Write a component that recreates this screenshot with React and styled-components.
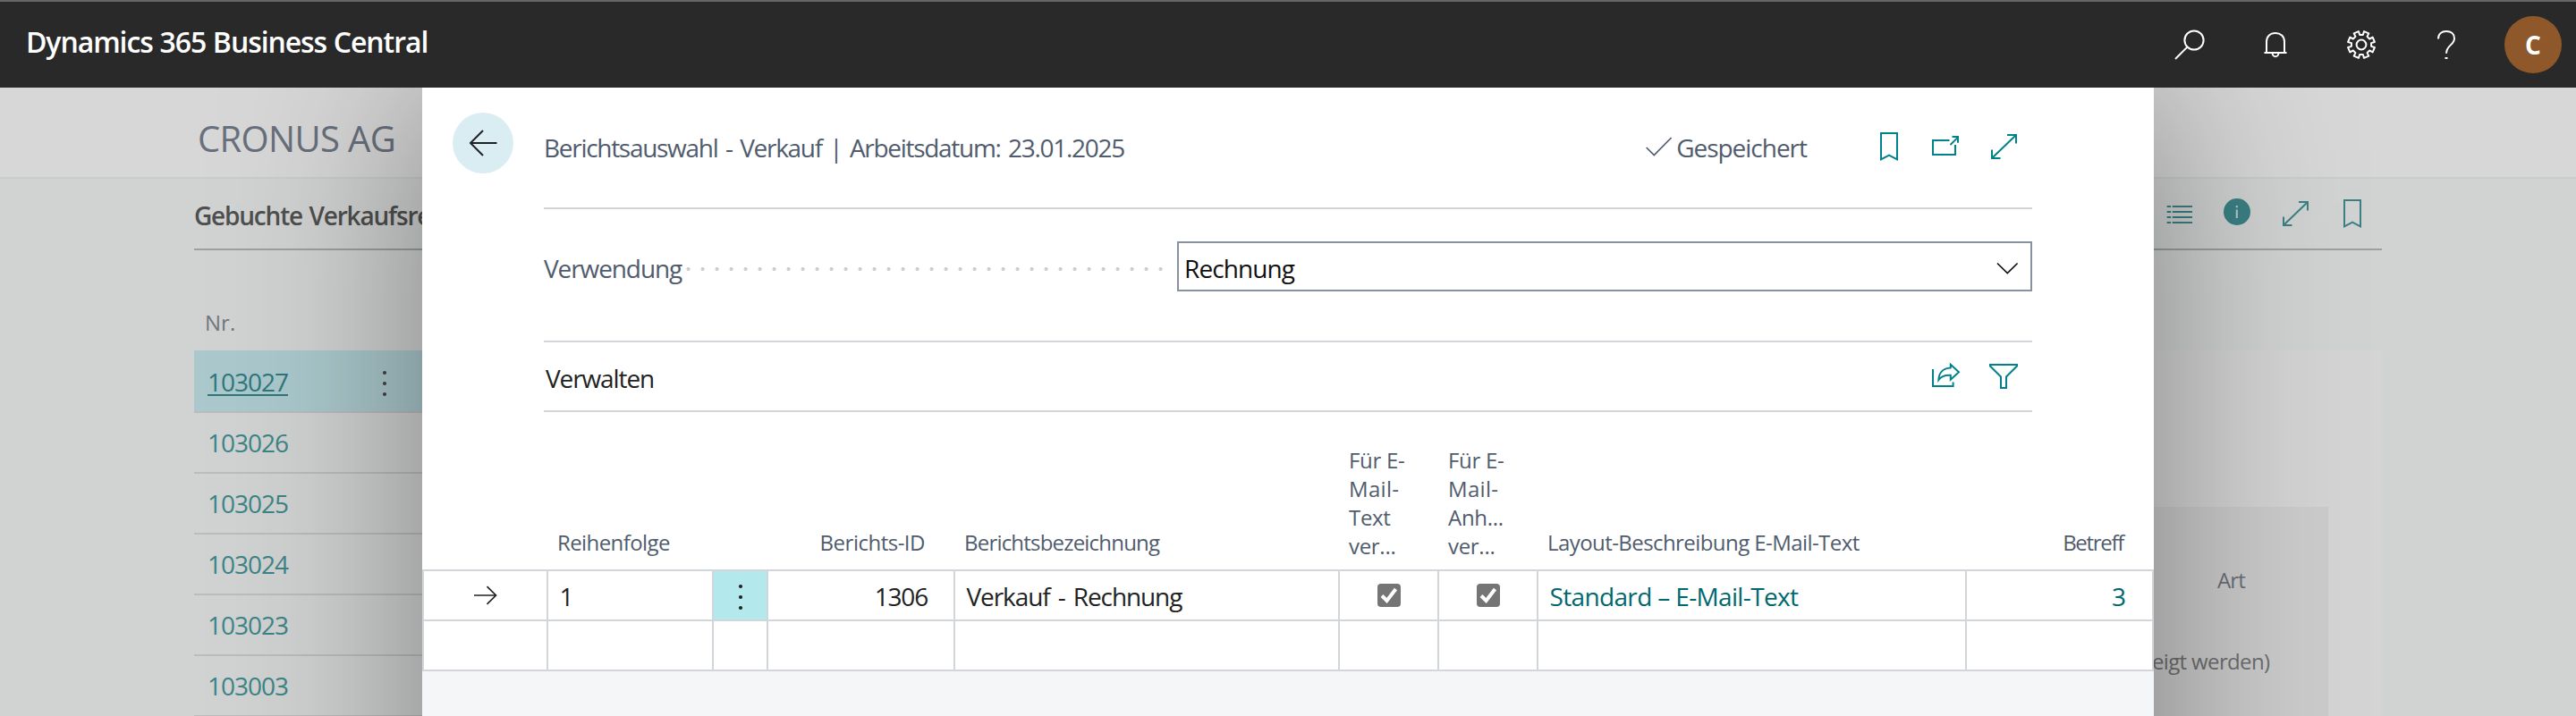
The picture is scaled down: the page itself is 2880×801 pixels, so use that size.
import React from 'react';
import styled, { createGlobalStyle, css } from 'styled-components';

const Global = createGlobalStyle`
  *, *::before, *::after { box-sizing: border-box; }
  html, body { margin: 0; padding: 0; }
  body {
    font-family: "Open Sans", "Noto Sans", sans-serif;
    font-size: 28px;
    line-height: 40px;
    background: #d1d3d2;
    overflow: hidden;
  }
`;

const Screen = styled.div`
  position: relative;
  display: flex;
  flex-direction: column;
  width: 2880px;
  height: 801px;
  overflow: hidden;
  background: #d1d3d2;
`;

const Label = styled.span`
  white-space: nowrap;
  letter-spacing: ${(p) => p.$spacing || 0}px;
  word-spacing: ${(p) => p.$word || 0}px;
`;

const Svg = styled.svg.attrs({ fill: 'none', stroke: 'currentColor' })`
  display: block;
  flex: none;
  overflow: visible;
  stroke-width: 2px;
`;

/* ---------- top bar ---------- */

const TopBar = styled.header`
  position: relative;
  z-index: 3;
  flex: none;
  display: flex;
  justify-content: space-between;
  height: 98px;
  border-top: 2px solid #666;
  background: #292929;
  color: #fff;
`;

const Product = styled.div`
  padding: 25px 0 0 29px;
  font-size: 32px;
  font-weight: 600;
`;

const TopActions = styled.div`
  display: flex;
`;

const TopAction = styled.div`
  display: flex;
  align-items: center;
  justify-content: center;
  width: 96px;
`;

const Avatar = styled.div`
  width: 64px;
  height: 64px;
  border-radius: 50%;
  background: #8e582b;
  text-align: center;
  font-size: 28px;
  font-weight: 700;
  line-height: 64px;
`;

/* ---------- page behind the dialog ---------- */

const CompanyBar = styled.div`
  flex: none;
  display: flex;
  align-items: center;
  height: 102px;
  padding: 13px 221px 0;
  border-bottom: 2px solid #cacccb;
  background: #d7d7d7;
  color: #68707c;
  font-size: 40px;
`;

const PageHead = styled.div`
  flex: none;
  display: flex;
  align-items: center;
  justify-content: space-between;
  height: 80px;
  margin: 0 217px;
  padding-right: 15px;
  border-bottom: 2px solid #9c9fa3;
  color: #4f4f4f;
  font-weight: 600;
`;

const PageTitle = styled.div`
  padding-top: 3px;
`;

const PageIcons = styled.div`
  display: flex;
  gap: 28.5px;
  color: #3a8084;
`;

const PageBody = styled.div`
  flex: 1;
  display: flex;
  justify-content: space-between;
  margin: 0 217px;
`;

const List = styled.div`
  width: 1700px;
`;

const ListHead = styled.div`
  height: 112px;
  padding: 61px 0 0 12px;
  color: #72777e;
  font-size: 24px;
`;

const ListRow = styled.div`
  display: flex;
  align-items: center;
  height: 68px;
  padding-left: 15px;
  border-bottom: 2px solid #bcbcbc;
  color: #3d8588;
  ${(p) => p.$active && css`
    height: 70px;
    padding-top: 2px;
    background: #abc9cd;
    color: #2f777b;
    text-decoration: underline;
    text-decoration-thickness: 2px;
    text-underline-offset: 3px;
  `}
`;

const RowMenu = styled.span`
  display: block;
  margin-left: 105px;
  color: #444;
`;

const FactBox = styled.aside`
  width: 460px;
  margin-top: 112px;
  padding: 175px 60px 0 0;
  background: #d4d4d4;
`;

const FactPart = styled.div`
  height: 300px;
  padding: 66px 0 0 203px;
  background: #cccccc;
  color: #6c6f77;
  font-size: 24px;
  line-height: 32px;
`;

const FactHeading = styled.div`
  padding-left: 73px;
`;

const FactNote = styled.div`
  margin-top: 59px;
  color: #6f6f6f;
`;

/* ---------- dialog ---------- */

const Dialog = styled.section`
  position: absolute;
  z-index: 2;
  top: 98px;
  left: 472px;
  width: 1936px;
  height: 1100px;
  background: #f5f6f8;
  box-shadow: 0 0 200px rgba(0, 0, 0, 0.4);
`;

const DialogUpper = styled.div`
  display: grid;
  grid-template-columns: 136px 1664px;
  background: #fff;
`;

const BackCell = styled.div`
  padding: 28px 0 0 34px;
`;

const BackButton = styled.div`
  display: flex;
  align-items: center;
  justify-content: center;
  width: 68px;
  height: 68px;
  border-radius: 50%;
  background: #daedf3;
  color: #222;
`;

const DialogMain = styled.div`
  display: flex;
  flex-direction: column;
`;

const TitleRow = styled.div`
  display: flex;
  justify-content: space-between;
  height: 136px;
  padding-top: 46px;
  border-bottom: 2px solid #d2d5d9;
  color: #505c6d;
`;

const TitleText = styled.div`
  padding-top: 1px;
`;

const TitleTools = styled.div`
  display: flex;
  align-items: center;
  height: 40px;
  padding-right: 14px;
`;

const Saved = styled.div`
  display: flex;
  align-items: center;
  height: 40px;
  padding-top: 1px;
  margin-right: 74px;
`;

const ToolIcons = styled.div`
  display: flex;
  gap: 28px;
  color: #00828a;
`;

const FieldRow = styled.div`
  display: flex;
  align-items: center;
  height: 56px;
  margin: 36px 0 55px;
`;

const FieldLabel = styled.div`
  width: 154px;
  padding-top: 3px;
  color: #505c6d;
`;

const Leader = styled.div`
  width: 544px;
  height: 16px;
  margin: 6px 10px 0 0;
  background: radial-gradient(circle at 7.6px 8px, #cbd0d6 1.8px, transparent 2.4px) 0 0 / 16px 16px repeat-x;
`;

const Select = styled.div`
  display: flex;
  align-items: center;
  justify-content: space-between;
  width: 956px;
  height: 56px;
  padding: 3px 14px 0 6px;
  border: 2px solid #8a919e;
  color: #111;
`;

const ActionRow = styled.div`
  display: flex;
  align-items: center;
  justify-content: space-between;
  height: 80px;
  padding: 0 14px 0 2px;
  border: solid #d2d5d9;
  border-width: 2px 0;
  color: #222;
`;

const ActionName = styled.div`
  padding-top: 3px;
`;

/* ---------- grid of lines ---------- */

const columns = '141px 185px 61px 209px 430px 111px 111px 479px 209px';

const GridHead = styled.div`
  display: grid;
  grid-template-columns: ${columns};
  align-items: end;
  height: 176px;
  background: #fff;
  color: #505c6d;
  font-size: 24px;
  line-height: 32px;
`;

const HeadCell = styled.div`
  padding: ${(p) => (p.$stacked ? '0 0 10px 10px' : '0 34px 14px 10px')};
  text-align: ${(p) => (p.$right ? 'right' : 'left')};
`;

const HeadLine = styled.div`
  white-space: nowrap;
`;

const GridBody = styled.div`
  border-top: 2px solid #d2d5d9;
`;

const GridRow = styled.div`
  display: grid;
  grid-template-columns: ${columns};
  height: 56px;
  border-bottom: 2px solid #d2d5d9;
  background: #fff;
`;

const cellPadding = {
  center: '0',
  'flex-end': '1px 29px 0 0',
  'flex-start': '1px 0 0 12.5px',
};

const Cell = styled.div`
  display: flex;
  align-items: center;
  justify-content: ${(p) => p.$align || 'flex-start'};
  padding: ${(p) => cellPadding[p.$align || 'flex-start']};
  border-right: 2px solid #d2d5d9;
  background: ${(p) => (p.$menu ? '#b3e9ec' : 'transparent')};
  color: ${(p) => (p.$link ? '#00686f' : '#222')};
  &:first-child { border-left: 2px solid #d2d5d9; }
`;

const CheckBox = styled.div`
  display: flex;
  align-items: center;
  justify-content: center;
  width: 26px;
  height: 26px;
  border-radius: 4px;
  background: #757575;
  color: #fff;
`;

/* ---------- icons ---------- */

const SearchIcon = () => (
  <Svg width="36" height="36" viewBox="0 0 36 36">
    <circle cx="23" cy="13" r="10.6" />
    <path d="M15.4 20.6 L2 34" />
  </Svg>
);

const BellIcon = () => (
  <Svg width="36" height="36" viewBox="0 0 36 36">
    <path d="M5.5 27 H30.5 M8 27 V14.5 C8 8.5 12.5 4.9 18 4.9 S28 8.5 28 14.5 V27" />
    <path d="M14.6 27.5 A3.4 3.8 0 0 0 21.4 27.5" />
  </Svg>
);

const GearIcon = () => {
  const pts = [];
  for (let i = 0; i < 8; i += 1) {
    [[-13, 11.2], [-11, 15.2], [11, 15.2], [13, 11.2]].forEach(([d, r]) => {
      const a = ((i * 45 + 22.5 + d) * Math.PI) / 180;
      pts.push(`${(18 + r * Math.sin(a)).toFixed(2)},${(18 - r * Math.cos(a)).toFixed(2)}`);
    });
  }
  return (
    <Svg width="36" height="36" viewBox="0 0 36 36">
      <polygon points={pts.join(' ')} strokeLinejoin="round" />
      <circle cx="18" cy="18" r="5.4" />
    </Svg>
  );
};

const HelpIcon = () => (
  <Svg width="36" height="36" viewBox="0 0 36 36">
    <path d="M8 11.5 C8 6 11.6 3 17 3 S26 6 26 11 C26 18.5 17 18.5 17 27.8" />
    <path d="M15.5 33 H18.5" />
  </Svg>
);

const ListIcon = () => (
  <Svg width="36" height="36" viewBox="0 0 36 36">
    <path d="M3.7 10 H8 M9.7 10 H32 M3.7 16 H8 M9.7 16 H32 M3.7 22 H8 M9.7 22 H32 M3.7 28 H8 M9.7 28 H32" />
  </Svg>
);

const InfoIcon = () => (
  <Svg width="36" height="36" viewBox="0 0 36 36">
    <circle cx="18" cy="16" r="15" fill="currentColor" stroke="none" />
    <path d="M17.8 13.5 V23 M17.8 9 V11.2" stroke="#b9cccc" />
  </Svg>
);

const ExpandIcon = () => (
  <Svg width="36" height="36" viewBox="0 0 36 36">
    <path d="M5 31 L32 5 M22 5 H32 V14.5 M5 21.5 V31 H14.5" />
  </Svg>
);

const BookmarkIcon = () => (
  <Svg width="36" height="36" viewBox="0 0 36 36">
    <path d="M9 3 H27 V32.3 L18 27.6 L9 32.3 Z" />
  </Svg>
);

const PopOutIcon = () => (
  <Svg width="36" height="36" viewBox="0 0 36 36">
    <path d="M21.5 11 H3 V27 H28 V16" />
    <path d="M22.5 16 L31 7.6 M24.5 7 H31 V13.8" />
  </Svg>
);

const ShareIcon = () => (
  <Svg width="36" height="36" viewBox="0 0 36 36">
    <path d="M3 10 V29 H25.6 V24.5" />
    <path d="M22.8 4.8 L32 13.2 L22.8 21.8 V16.8 C16.5 16.4 12 18.2 9.4 22 C9.6 14 14.5 8.8 22.8 8.4 Z" />
  </Svg>
);

const FilterIcon = () => (
  <Svg width="36" height="36" viewBox="0 0 36 36">
    <path d="M3 5 H33 V6.5 L21 18.5 V31 H15 V18.5 L3 6.5 Z" />
  </Svg>
);

const BackIcon = () => (
  <Svg width="32" height="32" viewBox="0 0 32 32">
    <path d="M16 2 L2 16 L16 30 M2 16 H31.5" />
  </Svg>
);

const ThinSvg = styled(Svg)`
  stroke-width: 1.7px;
`;

const RowArrow = () => (
  <ThinSvg width="26" height="22" viewBox="0 0 26 22">
    <path d="M0 11 H24.5 M14.5 1.2 L24.5 11 L14.5 20.8" />
  </ThinSvg>
);

const SavedIcon = () => (
  <ThinSvg width="34" height="36" viewBox="0 0 34 36">
    <path d="M0.7 18 L9.3 26.5 L28.6 7" />
  </ThinSvg>
);

const ChevronIcon = () => (
  <ThinSvg width="24" height="14" viewBox="0 0 24 14">
    <path d="M1 1.5 L12.3 12.5 L23.6 1.5" />
  </ThinSvg>
);

const DotsIcon = () => (
  <Svg width="6" height="30" viewBox="0 0 6 30">
    <g fill="currentColor" stroke="none">
      <circle cx="3" cy="5" r="2.1" />
      <circle cx="3" cy="17" r="2.1" />
      <circle cx="3" cy="29" r="2.1" />
    </g>
  </Svg>
);

const TickSvg = styled(Svg)`
  stroke-width: 4px;
`;

const TickIcon = () => (
  <TickSvg width="20" height="20" viewBox="0 0 20 20">
    <path d="M2 10.5 L7.5 16 L17.5 3" />
  </TickSvg>
);

/* ---------- data ---------- */

const invoices = ['103027', '103026', '103025', '103024', '103023', '103003'];

const headings = [
  { lines: [] },
  { lines: [['Reihenfolge', -0.59]] },
  { lines: [] },
  { lines: [['Berichts-ID', -0.5]], right: true },
  { lines: [['Berichtsbezeichnung', -0.8]] },
  { lines: [['Für E-', -0.3], ['Mail-', 0.3], ['Text', -0.3], ['ver...', -0.3]] },
  { lines: [['Für E-', -0.3], ['Mail-', 0.3], ['Anh...', -0.3], ['ver...', -0.3]] },
  { lines: [['Layout-Beschreibung E-Mail-Text', -0.57]] },
  { lines: [['Betreff', -1.3]], right: true },
];

export default function App() {
  return (
    <Screen>
      <Global />
      <TopBar>
        <Product><Label $spacing={-1.08} $word={0.5}>Dynamics 365 Business Central</Label></Product>
        <TopActions>
          <TopAction><SearchIcon /></TopAction>
          <TopAction><BellIcon /></TopAction>
          <TopAction><GearIcon /></TopAction>
          <TopAction><HelpIcon /></TopAction>
          <TopAction><Avatar>C</Avatar></TopAction>
        </TopActions>
      </TopBar>

      <CompanyBar><Label $spacing={-0.65}>CRONUS AG</Label></CompanyBar>
      <PageHead>
        <PageTitle><Label $spacing={-1.2} $word={1.5}>Gebuchte Verkaufsrechnungen</Label></PageTitle>
        <PageIcons>
          <ListIcon />
          <InfoIcon />
          <ExpandIcon />
          <BookmarkIcon />
        </PageIcons>
      </PageHead>
      <PageBody>
        <List>
          <ListHead>Nr.</ListHead>
          {invoices.map((no, i) => (
            <ListRow key={no} $active={i === 0}>
              <Label $spacing={-1.01}>{no}</Label>
              {i === 0 && <RowMenu><DotsIcon /></RowMenu>}
            </ListRow>
          ))}
        </List>
        <FactBox>
          <FactPart>
            <FactHeading><Label $spacing={-0.9}>Art</Label></FactHeading>
            <FactNote><Label $spacing={-0.65}>eigt werden)</Label></FactNote>
          </FactPart>
        </FactBox>
      </PageBody>

      <Dialog>
        <DialogUpper>
          <BackCell><BackButton><BackIcon /></BackButton></BackCell>
          <DialogMain>
            <TitleRow>
              <TitleText>
                <Label $spacing={-1.29} $word={2.5}>Berichtsauswahl - Verkauf | Arbeitsdatum: 23.01.2025</Label>
              </TitleText>
              <TitleTools>
                <Saved><SavedIcon /><Label $spacing={-1.02}>Gespeichert</Label></Saved>
                <ToolIcons>
                  <BookmarkIcon />
                  <PopOutIcon />
                  <ExpandIcon />
                </ToolIcons>
              </TitleTools>
            </TitleRow>
            <FieldRow>
              <FieldLabel><Label $spacing={-1.1}>Verwendung</Label></FieldLabel>
              <Leader />
              <Select><Label $spacing={-0.9}>Rechnung</Label><ChevronIcon /></Select>
            </FieldRow>
            <ActionRow>
              <ActionName><Label $spacing={-1.11}>Verwalten</Label></ActionName>
              <ToolIcons>
                <ShareIcon />
                <FilterIcon />
              </ToolIcons>
            </ActionRow>
          </DialogMain>
        </DialogUpper>

        <GridHead>
          {headings.map((h, i) => (
            <HeadCell key={i} $right={h.right} $stacked={h.lines.length > 1}>
              {h.lines.map(([text, spacing]) => (
                <HeadLine key={text}><Label $spacing={spacing}>{text}</Label></HeadLine>
              ))}
            </HeadCell>
          ))}
        </GridHead>
        <GridBody>
          <GridRow>
            <Cell $align="center"><RowArrow /></Cell>
            <Cell>1</Cell>
            <Cell $align="center" $menu><DotsIcon /></Cell>
            <Cell $align="flex-end"><Label $spacing={-1.18}>1306</Label></Cell>
            <Cell><Label $spacing={-1.1} $word={3}>Verkauf - Rechnung</Label></Cell>
            <Cell $align="center"><CheckBox><TickIcon /></CheckBox></Cell>
            <Cell $align="center"><CheckBox><TickIcon /></CheckBox></Cell>
            <Cell $link><Label $spacing={-0.65}>Standard – E-Mail-Text</Label></Cell>
            <Cell $align="flex-end" $link>3</Cell>
          </GridRow>
          <GridRow>
            {headings.map((h, i) => <Cell key={i} />)}
          </GridRow>
        </GridBody>
      </Dialog>
    </Screen>
  );
}
